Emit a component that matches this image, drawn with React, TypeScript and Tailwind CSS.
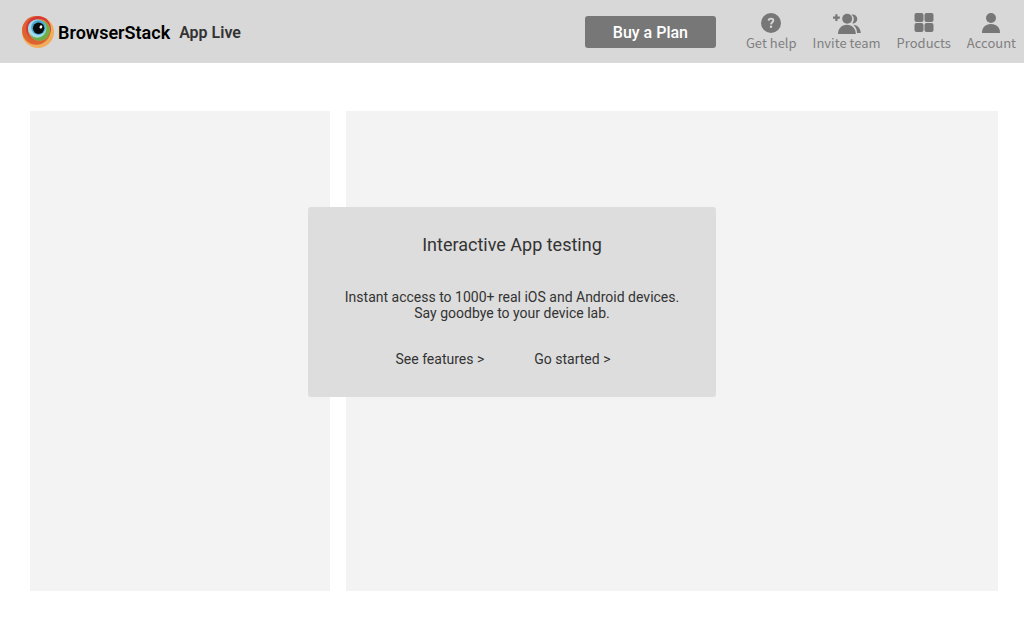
import type { ReactNode } from "react";

function Logo() {
  return (
    <svg viewBox="0 0 32 32" className="size-8 shrink-0" aria-hidden="true">
      <defs>
        <linearGradient id="iris" x1="0" y1="1" x2="1" y2="0">
          <stop offset="0" stopColor="#a9e0ee" />
          <stop offset="1" stopColor="#8fd3e8" />
        </linearGradient>
      </defs>
      <circle cx="16" cy="16" r="16" fill="#f0ae5b" />
      <circle cx="14.3" cy="14.4" r="14.3" fill="#dd6430" />
      <circle cx="16.4" cy="12.6" r="12.4" fill="#d6373c" />
      <circle cx="17" cy="14" r="11" fill="#e0883f" />
      <circle cx="17.5" cy="14.6" r="10.4" fill="#6fae45" />
      <circle cx="15.2" cy="12.6" r="9.2" fill="url(#iris)" />
      <circle cx="16.4" cy="11.600" r="7.300" fill="#45a8cf" />
      <circle cx="16.6" cy="12.2" r="5.7" fill="#0b0b0b" />
      <ellipse cx="18.9" cy="10.9" rx="1.3" ry="1.6" transform="rotate(35 18.9 10.9)" fill="#fff" />
    </svg>
  );
}

function HelpIcon() {
  return (
    <svg viewBox="0 0 20 20" className="size-5" fill="none" aria-hidden="true">
      <circle cx="10" cy="10" r="10" fill="#777" />
      <path d="M7.600 7.600c.1-1.200 1-2 2.400-2s2.300.8 2.300 1.900c0 1.600-2.200 1.800-2.300 3.900" stroke="#d8d8d8" strokeWidth="1.900" />
      <circle cx="10" cy="13.800" r="1.200" fill="#d8d8d8" />
    </svg>
  );
}

function InviteIcon() {
  return (
    <svg viewBox="0 0 28 20" className="h-5 w-7 overflow-visible" fill="#777" aria-hidden="true">
      <path d="M2.300 1.300h2.200v2.300h2.300v2.200H4.500V8.100H2.300V5.800H0V3.600h2.300z" />
      <circle cx="14.200" cy="5.700" r="5" />
      <path d="M5 21c0-5.300 3.500-9.300 8.900-9.300s8.900 4 8.900 9.300z" />
      <path d="M18.400 1.700c3.200-.6 5.900 1.400 5.900 4.300 0 2.800-2.200 4.700-5.200 4.500 1.200-1.300 1.700-2.900 1.700-4.700s-.9-3.200-2.400-4.100z" />
      <path d="M20.400 11.700c4.100.4 7.200 3.700 7.400 8.300h-3.700c-.2-3.500-1.400-6.300-3.700-8.300z" />
    </svg>
  );
}

function ProductsIcon() {
  return (
    <svg viewBox="0 0 20 20" className="size-5" fill="#777" aria-hidden="true">
      <rect x="0.500" y="0" width="9" height="9" rx="2" />
      <rect x="10.500" y="0" width="9" height="9" rx="2" />
      <rect x="0.500" y="10" width="9" height="9" rx="2" />
      <rect x="10.500" y="10" width="9" height="9" rx="2" />
    </svg>
  );
}

function AccountIcon() {
  return (
    <svg viewBox="0 0 20 20" className="size-5" fill="#777" aria-hidden="true">
      <circle cx="10" cy="5" r="5" />
      <path d="M1 20c0-5.500 3.200-9 9-9s9 3.500 9 9z" />
    </svg>
  );
}

function NavItem({ label, children }: { label: string; children: ReactNode }) {
  return (
    <a href="#" className="flex flex-col items-center whitespace-nowrap">
      {children}
      <span className="font-['Noto_Sans_CJK_SC',sans-serif] text-[13px] leading-5 text-[#808080]">{label}</span>
    </a>
  );
}

export default function App() {
  return (
    <div className="min-h-screen bg-white font-[Roboto,sans-serif] text-[#333]">
      <header className="flex h-[63px] items-center bg-[#d8d8d8] pt-px pr-2 pl-[22px]">
        <a href="#" className="flex items-center gap-1 whitespace-nowrap">
          <Logo />
          <span className="pt-0.5 text-lg font-semibold text-black">BrowserStack</span>
          <span className="ml-[5px] pt-0.5 text-base font-semibold">App Live</span>
        </a>
        <button
          type="button"
          className="mr-[30px] ml-auto h-8 w-[131px] shrink-0 rounded-[3px] bg-[#777] pt-0.5 text-base font-medium text-white"
        >
          Buy a Plan
        </button>
        <nav className="flex gap-4 pt-0.5">
          <NavItem label="Get help">
            <HelpIcon />
          </NavItem>
          <NavItem label="Invite team">
            <InviteIcon />
          </NavItem>
          <NavItem label="Products">
            <ProductsIcon />
          </NavItem>
          <NavItem label="Account">
            <AccountIcon />
          </NavItem>
        </nav>
      </header>

      <main className="relative flex gap-4 pt-12 pr-[26px] pb-10 pl-[30px]">
        <aside className="min-h-[480px] w-[300px] shrink-0 bg-[#f3f3f3]" />
        <div className="min-h-[480px] flex-1 bg-[#f3f3f3]" />

        <section className="absolute inset-x-0 top-36 mx-auto w-[408px] rounded-[3px] bg-[#ddd] px-6 pt-6 pb-7 text-center">
          <h1 className="text-lg leading-7">Interactive App testing</h1>
          <p className="mt-[30px] text-sm leading-4">
            Instant access to 1000+ real iOS and Android devices.
            <br />
            Say goodbye to your device lab.
          </p>
          <div className="mt-7 flex justify-center gap-[50px] pr-[18px] text-sm leading-5">
            <a href="#">See features &gt;</a>
            <a href="#">Go started &gt;</a>
          </div>
        </section>
      </main>
    </div>
  );
}
